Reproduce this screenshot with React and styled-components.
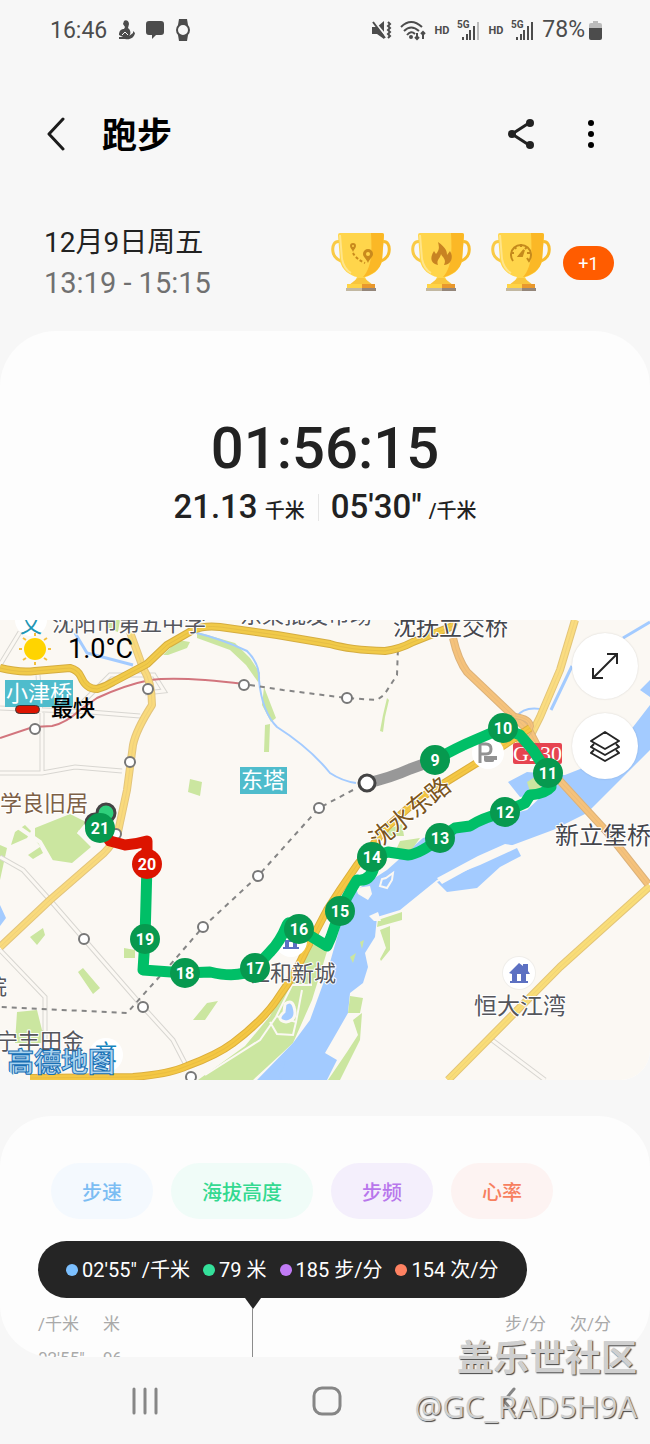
import styled, { createGlobalStyle } from "styled-components";

const GlobalStyle = createGlobalStyle`
	* {
		box-sizing: border-box;
	}
	body {
		margin: 0;
		background: #f7f7f7;
		color: #222;
		font-family: Roboto, "Noto Sans CJK SC", sans-serif;
	}
	button {
		border: 0;
		padding: 0;
		background: none;
		color: inherit;
		font: inherit;
		cursor: pointer;
	}
	svg {
		display: block;
	}
`;

const Page = styled.div`
	position: relative;
	display: flex;
	flex-direction: column;
`;

const StatusBar = styled.div`
	display: flex;
	align-items: center;
	justify-content: space-between;
	height: 60px;
	padding: 0 48px 0 50px;
	color: #4c4c4c;
	font-size: 23px;
`;

const StatusGroup = styled.div`
	display: flex;
	align-items: center;
	gap: ${(props) => props.$gap}px;
`;

const HdLabel = styled.span`
	font-size: 11px;
	font-weight: 700;
`;

const Percent = styled.span`
	display: flex;
	align-items: center;
	gap: 4px;
	line-height: 28px;
`;

const Header = styled.header`
	display: flex;
	align-items: center;
	height: 148px;
	padding: 0 45px 0 42px;
`;

const Title = styled.h1`
	flex: 1;
	margin: 0 0 0 32px;
	padding-top: 6px;
	color: #000;
	font-size: 35px;
	line-height: 44px;
	font-weight: 700;
`;

const IconButton = styled.button`
	display: flex;
	align-items: center;
	justify-content: center;
	width: 28px;
	height: 44px;
	margin-left: ${(props) => props.$space || 0}px;
`;

const Summary = styled.section`
	display: flex;
	align-items: center;
	justify-content: space-between;
	height: 110px;
	padding: 0 36px 0 44px;
`;

const DateText = styled.div`
	color: #222;
	font-size: 28px;
	line-height: 40px;
`;

const TimeRange = styled.div`
	color: #707070;
	font-size: 29px;
	line-height: 40px;
`;

const Awards = styled.div`
	display: flex;
	align-items: center;
	gap: 20px;
`;

const MoreAwards = styled.button`
	width: 51px;
	height: 34px;
	margin-left: -8px;
	border-radius: 17px;
	background: #ff5c00;
	color: #fff;
	font-size: 18px;
`;

const Card = styled.section`
	overflow: hidden;
	margin-top: ${(props) => props.$top}px;
	border-radius: ${(props) => props.$radius};
	background: #fdfdfd;
`;

const Totals = styled.div`
	display: flex;
	flex-direction: column;
	align-items: center;
	padding: 82px 0 87px;
`;

const Duration = styled.div`
	font-size: 58px;
	line-height: 70px;
	font-weight: 500;
`;

const Metrics = styled.div`
	display: flex;
	align-items: center;
	margin-top: 2px;
`;

const Metric = styled.div`
	padding: 0 13px;
	font-size: 33px;
	line-height: 44px;
	font-weight: 500;

	& + & {
		background: linear-gradient(#e6e6e6, #e6e6e6) 0 9px / 1px 27px no-repeat;
	}
`;

const Unit = styled.span`
	margin-left: 7px;
	font-size: 20px;
`;

const MapBox = styled.div`
	position: relative;

	> svg {
		width: 100%;
		height: auto;
	}
`;

const MapLegend = styled.div`
	position: absolute;
	top: 11px;
	left: 15px;
	color: #000;
`;

const Weather = styled.div`
	display: flex;
	align-items: center;
	gap: 13px;
	font-size: 27px;
	line-height: 36px;
`;

const Fastest = styled.div`
	display: flex;
	align-items: center;
	gap: 11px;
	margin-top: 26px;
	font-size: 22px;
	line-height: 32px;
	font-weight: 500;
`;

const FastestSwatch = styled.span`
	width: 25px;
	height: 9px;
	border: 1px solid #3a3a3a;
	border-radius: 5px;
	background: #dc1400;
`;

const MapControls = styled.div`
	position: absolute;
	top: 13px;
	right: 12px;
	display: flex;
	flex-direction: column;
	gap: 14px;
`;

const RoundButton = styled.button`
	display: flex;
	align-items: center;
	justify-content: center;
	width: 66px;
	height: 66px;
	border-radius: 50%;
	background: #fff;
	box-shadow: 0 0 2px rgba(0, 0, 0, 0.15);
`;

const Chips = styled.div`
	display: flex;
	gap: 18px;
	padding: 47px 51px 0;
`;

const Chip = styled.button`
	height: 56px;
	padding: 0 31px;
	border-radius: 28px;
	background: ${(props) => props.$tint};
	color: ${(props) => props.$color};
	font-size: 20px;
	font-weight: 500;
	white-space: nowrap;
`;

const Chart = styled.div`
	position: relative;
	height: 138px;
	overflow: hidden;
	padding: 22px 38px 0;
`;

const Cursor = styled.div`
	position: absolute;
	top: 79px;
	bottom: 0;
	left: 245px;
	width: 16px;

	&::before {
		content: "";
		position: absolute;
		top: 0;
		left: 0;
		border: 8px solid transparent;
		border-top: 11px solid #252525;
		border-bottom: 0;
	}

	&::after {
		content: "";
		position: absolute;
		top: 10px;
		bottom: 0;
		left: 7px;
		width: 1px;
		background: #8c8c8c;
	}
`;

const Readout = styled.div`
	display: inline-flex;
	align-items: center;
	gap: 13px;
	height: 57px;
	padding: 0 29px 0 28px;
	border-radius: 29px;
	background: #252525;
	color: #fff;
	font-size: 20px;
	line-height: 28px;
	white-space: nowrap;
`;

const ReadoutItem = styled.span`
	display: flex;
	align-items: center;
	gap: 4px;

	&::before {
		content: "";
		width: 12px;
		height: 12px;
		border-radius: 50%;
		background: ${(props) => props.$color};
	}
`;

const AxisRow = styled.div`
	display: flex;
	gap: 23px;
	height: 34px;
	padding-top: 10px;
	color: #a9a9a9;
	font-size: 17px;
	line-height: 32px;
`;

const AxisCell = styled.span`
	width: 42px;
	margin-left: ${(props) => (props.$end ? "auto" : "0")};
	white-space: nowrap;
`;

const NavBar = styled.nav`
	display: flex;
	align-items: center;
	justify-content: space-between;
	height: 87px;
	padding: 0 120px 0 124px;
`;

const NavButton = styled.button`
	display: flex;
	align-items: center;
	justify-content: center;
	width: 42px;
	height: 44px;
	color: #868686;
`;

const Watermark = styled.div`
	position: absolute;
	right: 13px;
	bottom: 14px;
	color: #cfcfcf;
	font-family: "Open Sans", "Noto Sans CJK SC", sans-serif;
	line-height: 48px;
	text-align: right;
	text-shadow: 1px 1px 1px #444;
	pointer-events: none;
`;

const Community = styled.div`
	font-size: 36px;
	font-weight: 700;
`;

const Member = styled.div`
	font-size: 31px;
`;

const trophies = ["route", "flame", "gauge"];

const chips = [
	{ label: "步速", color: "#7cbdf3", tint: "#f4f9fe" },
	{ label: "海拔高度", color: "#34d990", tint: "#f0fcf8" },
	{ label: "步频", color: "#b877ec", tint: "#f4effc" },
	{ label: "心率", color: "#f7805f", tint: "#fdf3f2" },
];

const readings = [
	{ text: "02'55\" /千米", color: "#7cc0ff" },
	{ text: "79 米", color: "#34e09a" },
	{ text: "185 步/分", color: "#c17bf5" },
	{ text: "154 次/分", color: "#ff8262" },
];

const pins = [
	[9, 435, 140],
	[10, 503, 108],
	[11, 548, 153],
	[12, 505, 192],
	[13, 440, 218],
	[14, 372, 237],
	[15, 340, 291],
	[16, 299, 309],
	[17, 255, 348],
	[18, 185, 353],
	[19, 145, 319],
	[20, 147, 244],
	[21, 100, 208],
];

const stations = [
	[148, 69],
	[130, 142],
	[244, 65],
	[35, 109],
	[347, 78],
	[319, 188],
	[258, 256],
	[203, 307],
	[84, 319],
	[143, 387],
	[191, 457],
	[116, 214],
];

const lanes =
	"M0 237L23 250L50 280L83 318L143 387L173 420L187 447M0 330L45 377V420M0 153H42L75 147L122 151M42 93V153M0 88L90 92L140 96M38 55L41 93M20 12L0 45M80 85L110 55L154 55L164 71L145 73M492 420L545 460";

const roads = [
	{ d: "M130 12L143 48Q152 62 152 85Q136 110 133 125L127 170L118 212Q113 224 104 233L50 280L0 327", width: 6, edge: "#e2c47c", fill: "#f9da7c" },
	{ d: "M575 0L560 50L540 97L527 123", width: 6, edge: "#e3c578", fill: "#fadc80" },
	{ d: "M650 266L560 347L448 460", width: 6, edge: "#e3c578", fill: "#f9dd78" },
	{ d: "M453 18Q458 40 467 52L507 90L530 112L550 150L607 212L648 264", width: 6, edge: "#dcb27a", fill: "#f5c27b" },
	{ d: "M515 96Q530 98 531 106Q528 118 516 121", width: 4, edge: "#dcb27a", fill: "#f5c27b" },
	{ d: "M0 48Q20 53 35 51L70 48Q78 50 81 57Q86 69 97 69Q105 67 113 62L147 44L167 25L193 10Q205 5 220 7L277 15L330 24Q350 30 385 31Q400 29 413 22L453 6L455 0", width: 6, edge: "#d5ad40", fill: "#f1ca49" },
	{ d: "M30 458L133 457Q170 454 187 446Q217 435 233 423Q265 399 280 375Q294 356 305 332L327 290L340 270L357 245L387 207L417 180L480 141L530 108", width: 6, edge: "#dbae3d", fill: "#f4c744" },
];

function Trophy({ kind }) {
	return (
		<svg width="60" height="60" viewBox="0 0 60 60" role="img" aria-label={kind}>
			<g fill="none" stroke="#f9ca45" strokeWidth="3">
				<path d="M10 9C3 7 1 13 2 19C3 25 8 28 14 29" />
				<path d="M50 9C57 7 59 13 58 19C57 25 52 28 46 29" stroke="#f8bd2d" />
			</g>
			<path d="M7 2Q7 0 9 0H51Q53 0 53 2L51 27C50 37 40 43 34 44L36 48H24L26 44C20 43 10 37 9 27Z" fill="#ffd54b" />
			<path d="M40 0H51Q53 0 53 2L51 27C50 37 39 43 32 44C41 34 41 19 40 0Z" fill="#fbb826" />
			<path d="M9 2L11 26Q13 36 20 40" fill="none" stroke="#ffe58a" strokeWidth="2" />
			<path d="M27 45H33L42 52H18Z" fill="#f8c53c" />
			<path d="M16 51H44V56H16Z" fill="#ffd447" />
			<path d="M31 51H44V56H31Z" fill="#e8982d" />
			<path d="M15 55H45V58H15Z" fill="#c2b8a2" />
			<path d="M31 55H45V58H31Z" fill="#94867a" />
			{kind === "route" && (
				<g fill="#c98a1d">
					<path fillRule="evenodd" d="M22 10a3 3 0 0 1 3 3c0 2-2 3-3 6c-1-3-3-4-3-6a3 3 0 0 1 3-3Zm0 2a1 1 0 1 0 0 2a1 1 0 0 0 0-2ZM37 16a5 5 0 0 1 5 5c0 3-3 4-5 9c-2-5-5-6-5-9a5 5 0 0 1 5-5Zm0 3a2 2 0 1 0 0 4a2 2 0 0 0 0-4Z" />
					<path d="M22 20Q25 26 34 30" fill="none" stroke="#c98a1d" strokeWidth="2" strokeDasharray="3 2" />
				</g>
			)}
			{kind === "flame" && (
				<path d="M27 9C35 15 36 18 36 22L39 18C43 24 40 32 33 32C36 26 31 24 30 21C29 26 25 27 27 32C19 30 19 24 23 18L25 21C29 17 28 13 27 9Z" fill="#c88322" />
			)}
			{kind === "gauge" && (
				<g fill="none" stroke="#c58a1c" strokeWidth="2">
					<path d="M22 28A10 10 0 1 1 38 28L36 25" />
					<path d="M30 11V14M20 20H23M40 20H36M24 14L25 16M36 14L34 16" />
					<path d="M28 23L33 17L31 23Z" fill="#c58a1c" />
				</g>
			)}
		</svg>
	);
}

function Signal({ weak }) {
	return (
		<svg width="23" height="22" viewBox="0 0 23 22" fill="#4c4c4c">
			<text x="0" y="9" fontSize="10" fontWeight="700">5G</text>
			<rect x="5" y="18" width="2" height="3" />
			<rect x="9" y="15" width="2" height="6" />
			<rect x="12" y="11" width="2" height="10" />
			<rect x="16" y="7" width="2" height="14" />
			<rect x="20" y="3" width="2" height="18" fill={weak ? "#bcbcbc" : "#4c4c4c"} />
		</svg>
	);
}

function Status() {
	return (
		<StatusBar>
			<StatusGroup $gap={11}>
				<span>16:46</span>
				<svg width="17" height="20" viewBox="0 0 17 20" fill="#4c4c4c">
					<path d="M6 1C8-1 11 1 11 4L10 8C13 10 13 14 11 16L15 13V11L17 13C16 18 12 20 7 19H1V17H5L1 15C1 11 3 9 6 9L7 7L5 4Z" />
					<path d="M4 15L7 12L10 15" fill="none" stroke="#f7f7f7" />
				</svg>
				<svg width="18" height="18" viewBox="0 0 18 18" fill="#4c4c4c">
					<path d="M3 0H15Q18 0 18 3V11Q18 14 15 14H10L6 18V14H3Q0 14 0 11V3Q0 0 3 0Z" />
				</svg>
				<svg width="16" height="22" viewBox="0 0 16 22" fill="#4c4c4c">
					<path d="M4 0H12L13 6H3ZM3 16H13L12 22H4Z" />
					<circle cx="8" cy="11" r="6" fill="#f7f7f7" stroke="#4c4c4c" strokeWidth="2" />
				</svg>
			</StatusGroup>
			<StatusGroup $gap={8}>
				<svg width="20" height="20" viewBox="0 0 20 20" fill="#4c4c4c">
					<path d="M0 7H5L12 1V19L5 14H0Z" />
					<path d="M1 0L14 16" stroke="#f7f7f7" strokeWidth="2" />
					<path d="M1 2L13 18M16 2L18 4L16 6L18 8L16 10L18 12L16 14L18 16L16 18" fill="none" stroke="#4c4c4c" strokeWidth="2" />
				</svg>
				<svg width="26" height="21" viewBox="0 0 26 21" fill="none" stroke="#4c4c4c" strokeWidth="2">
					<path d="M1 7Q11-3 22 7M4 11Q11 4 19 11M7 15Q11 10 15 14" />
					<circle cx="11" cy="17" r="1" />
					<path d="M17 13V19M15 17L17 19L19 17M23 19V12M21 14L23 12L25 14" />
				</svg>
				<HdLabel>HD</HdLabel>
				<Signal weak />
				<HdLabel>HD</HdLabel>
				<Signal />
				<Percent>
					78%
					<svg width="13" height="19" viewBox="0 0 13 19" fill="#4c4c4c">
						<path d="M4 0H9V2H11Q13 2 13 4V8H0V4Q0 2 2 2H4Z" fill="#bcbcbc" />
						<path d="M0 7H13V17Q13 19 11 19H2Q0 19 0 17Z" />
					</svg>
				</Percent>
			</StatusGroup>
		</StatusBar>
	);
}

function Terrain() {
	return (
		<>
			<rect width="650" height="460" fill="#fbf8f3" />
			<g fill="#cbe6a0">
				<path d="M35 208L70 194L86 202L77 213L91 227L72 243L52 240L35 220Z" />
				<path d="M11 225L15 212L25 205L31 211L27 218ZM28 235L40 227L43 233L33 239ZM0 225L7 228L0 260ZM30 317L43 308L45 315L37 325ZM78 352L83 348L100 368L93 374ZM124 328L135 330V338H124ZM193 400L207 383L218 381L205 400ZM17 392L37 390L42 410H47V423H15ZM190 159L202 162L200 176L188 172Z" />
				<path d="M197 12L235 23L250 38L260 53L258 62L246 45L230 30L197 18ZM163 35L178 20L190 22L187 28L168 35ZM105 0L120 0L118 12L106 8ZM264 67L276 98L271 102L262 85ZM265 105L270 104L269 132H264Z" />
				<path d="M198 460L245 426L270 396L293 350L308 325H329L312 380L293 423L253 460Z" />
				<path d="M387 78L383 95L380 111L383 112L385 97L389 80Z" />
			</g>
			<g fill="#a3cbff">
				<path d="M650 85L633 107L603 140L565 155L527 152L508 162L520 177L545 173L527 190L487 200L423 218L387 250L353 272L340 307L327 353L310 400L293 423L257 460H327L337 440L325 433L340 407L348 393L350 373L363 363L368 347L365 333L375 317L377 297L400 290L437 260L480 240L507 227L553 210L587 193L620 160L650 130Z" />
				<path d="M437 262L447 272L477 268L500 247L521 236L517 228L480 245ZM640 70L650 60V77Z" />
				<path d="M0 285L6 298L0 306ZM278 450L287 432L281 460Z" />
			</g>
			<g fill="#cbe6a0">
				<path d="M527 162L535 157L543 170L531 175ZM386 210L402 204L404 216H387ZM400 221L420 218L410 232H395Z" />
				<path d="M378 300L402 292V300L377 307ZM380 310L390 306V330L381 341L380 339L386 328ZM350 376L363 378L360 393H348ZM353 400L362 393L360 420L340 460H328L347 432L358 415Z" />
				<path d="M360 322L364 320L362 329ZM350 337L356 333L353 343Z" />
			</g>
			<path d="M356 268L370 266L372 274L368 280L358 274ZM369 296L378 292L381 301L374 301ZM437 258L442 264L480 243L507 229L517 226L505 224L478 236Z" fill="#fbf8f3" />
			<g fill="none" stroke="#fbf8f3" strokeWidth="2">
				<path d="M386 258L393 253L392 260L387 268L380 266L382 259Z" />
				<path d="M205 455L260 420L276 397L292 365L312 365M276 396L296 402L302 370M296 402L293 415L277 414L270 402" />
				<path d="M285 384Q292 379 294 387Q298 400 286 402Q275 400 284 392Z" fill="#a3cbff" strokeWidth="3" />
				<path d="M15 205L40 222L55 248M78 212L97 220" strokeWidth="4" />
			</g>
			<g fill="none" stroke="#a3cbff" strokeWidth="3">
				<path d="M193 12Q222 19 247 31Q260 44 259 60Q262 92 277 107Q310 128 330 153Q342 161 356 163" strokeWidth="2" />
				<path d="M75 13L87 33L133 45M650 2L623 18M572 46L562 67L551 90" />
				<path d="M545 90Q525 85 516 97" strokeWidth="2" />
			</g>
			<g fill="none">
				<path d={lanes} stroke="#d8d6d1" strokeWidth="5" />
				<path d={lanes} stroke="#fbf8f3" strokeWidth="3" />
			</g>
			<path d="M0 118L33 107L52 106Q66 103 80 90L97 78Q125 65 150 60Q180 56 244 64" fill="none" stroke="#d2757d" strokeWidth="2" />
			<g fill="none" stroke="#858585" strokeWidth="2" strokeDasharray="5 5">
				<path d="M250 65L283 70L347 78L377 80L384 75L397 55L398 27" />
				<path d="M353 170L319 188L258 256L203 307L170 345L143 375L127 393L0 387" />
			</g>
			{roads.map((road) => (
				<g key={road.d} fill="none" strokeLinejoin="round">
					<path d={road.d} stroke={road.edge} strokeWidth={road.width + 2} />
					<path d={road.d} stroke={road.fill} strokeWidth={road.width} />
					<path d={road.d} stroke={road.edge} strokeWidth="1" opacity="0.4" />
				</g>
			))}
			{stations.map(([x, y]) => (
				<circle key={`${x}-${y}`} cx={x} cy={y} r="5" fill="#fff" stroke="#777" strokeWidth="2" />
			))}
		</>
	);
}

function Places() {
	return (
		<g fontFamily="'Noto Sans CJK SC', sans-serif" fontSize="22" fill="#55565c">
			<circle cx="31" cy="0" r="16" fill="#fff" />
			<text x="20" y="12" fill="#2296b5">文</text>
			<circle cx="106" cy="435" r="17" fill="#fff" />
			<text x="95" y="440" fill="#1383be">文</text>
			<g stroke="#fff" strokeWidth="2" paintOrder="stroke" strokeLinejoin="round">
				<text x="52" y="11">沈阳市第五中学</text>
				<text x="240" y="3">东果批发市场</text>
				<text x="393" y="15" fontSize="23" fill="#45464c">沈抚立交桥</text>
				<text x="0" y="191" fill="#7d6046">学良旧居</text>
				<text x="555" y="224" fontSize="24" fill="#45464c">新立堡桥</text>
				<text x="248" y="361">仁和新城</text>
				<text x="474" y="394" fontSize="23">恒大江湾</text>
				<text x="-4" y="429">宁丰田金</text>
				<text x="-15" y="374">院</text>
				<text x="0" y="0" transform="translate(378 229) rotate(-39)" fill="#7b5520" fontSize="24">沈水东路</text>
			</g>
			<rect x="5" y="60" width="68" height="27" fill="#4fbccc" />
			<text x="6" y="81" fill="#fff">小津桥</text>
			<rect x="240" y="147" width="47" height="27" fill="#4fbccc" />
			<text x="241" y="168" fill="#fff">东塔</text>
			<rect x="513" y="123" width="49" height="21" rx="2" fill="#e64450" />
			<text x="513" y="141" fill="#fff" fontFamily="'Liberation Serif', serif">G230</text>
			<circle cx="488" cy="133" r="16" fill="#fff" />
			<path d="M480 143V124H486Q491 124 491 129Q491 134 486 134H480" fill="none" stroke="#929292" strokeWidth="3" />
			<path d="M484 136H494V141Q494 142 492 142H486Q484 142 484 140ZM494 136H497V140H494Z" fill="#929292" />
			<circle cx="519" cy="353" r="17" fill="#f0eeea" />
			<circle cx="519" cy="353" r="16" fill="#fff" />
			<path d="M509 353L519 343L523 346V344H528V351L530 354H526V361H528V363H510V361H512V354ZM517 354V361H521V354Z" fill="#5c70c2" fillRule="evenodd" />
			<circle cx="291" cy="321" r="16" fill="#fff" />
			<path d="M283 329V327H285V320H297V327H299V329ZM289 322V327H293V322Z" fill="#5c70c2" fillRule="evenodd" />
			<text x="7" y="452" fontSize="27" fontWeight="700" fill="#a9d4f0" stroke="#176fb5" strokeWidth="1">高德地图</text>
		</g>
	);
}

function Track() {
	return (
		<>
			<g fill="none" strokeWidth="11" strokeLinecap="round" strokeLinejoin="round">
				<path d="M367 163Q390 158 410 149L435 140" stroke="#989898" />
				<path d="M435 140Q458 127 475 120L503 108L520 115L533 130L548 153L551 167Q545 174 530 175L525 183L505 192Q482 198 470 206L455 208L440 218Q420 234 408 235L388 232L372 237L374 247Q370 262 357 260Q346 278 340 291L331 317L327 326L299 309Q290 299 287 305Q280 322 270 332L255 348Q240 359 210 352L185 353L143 350L145 319L147 244" stroke="#00bf67" />
				<path d="M147 244V221Q137 224 125 225L110 221L101 208" stroke="#dc1400" />
			</g>
			<circle cx="367" cy="163" r="8" fill="#fff" stroke="#444" strokeWidth="3" />
			<circle cx="95" cy="203" r="9" fill="#087c47" stroke="#444" strokeWidth="3" />
			<circle cx="106" cy="193" r="9" fill="#2ecf7b" stroke="#444" strokeWidth="3" />
			{pins.map(([km, x, y]) => (
				<g key={km}>
					<circle cx={x} cy={y} r="15" fill={km === 20 ? "#dc1400" : "#07994f"} />
					<text x={x} y={y + 6} fill="#fff" fontSize="16" fontWeight="700" textAnchor="middle">
						{km}
					</text>
				</g>
			))}
		</>
	);
}

function RouteMap() {
	return (
		<MapBox>
			<svg viewBox="0 0 650 460">
				<Terrain />
				<Places />
				<Track />
			</svg>
			<MapLegend>
				<Weather>
					<svg width="40" height="36" viewBox="0 0 40 36">
						<circle cx="20" cy="18" r="11" fill="#ffd400" />
						<path d="M20 2V5M20 31V34M4 18H7M33 18H36M8 7L11 9M32 7L29 9M8 29L11 27M32 29L29 27" stroke="#f4bf3b" strokeWidth="2" />
					</svg>
					1.0°C
				</Weather>
				<Fastest>
					<FastestSwatch />
					最快
				</Fastest>
			</MapLegend>
			<MapControls>
				<RoundButton aria-label="expand">
					<svg width="28" height="28" viewBox="0 0 28 28" fill="none" stroke="#252525" strokeWidth="2">
						<path d="M2 26L26 2M16 2H26V12M2 16V26H12" />
					</svg>
				</RoundButton>
				<RoundButton aria-label="layers">
					<svg width="32" height="32" viewBox="0 0 32 32" fill="none" stroke="#252525" strokeWidth="2" strokeLinejoin="round">
						<path d="M16 2L30 11L16 19L2 11ZM5 14L2 17L16 25L30 17L27 14M5 20L2 23L16 31L30 23L27 20" />
					</svg>
				</RoundButton>
			</MapControls>
		</MapBox>
	);
}

function App() {
	return (
		<Page>
			<GlobalStyle />
			<Status />
			<Header>
				<IconButton aria-label="back">
					<svg width="20" height="34" viewBox="0 0 20 34" fill="none" stroke="#1c1c1c" strokeWidth="3" strokeLinecap="round" strokeLinejoin="round">
						<path d="M17 2L3 17L17 32" />
					</svg>
				</IconButton>
				<Title>跑步</Title>
				<IconButton aria-label="share">
					<svg width="28" height="30" viewBox="0 0 28 30" fill="#222">
						<path d="M22 4L5 15L22 26" fill="none" stroke="#222" strokeWidth="3" />
						<circle cx="23" cy="4" r="4" />
						<circle cx="5" cy="15" r="4" />
						<circle cx="23" cy="26" r="4" />
					</svg>
				</IconButton>
				<IconButton $space={42} aria-label="more">
					<svg width="6" height="30" viewBox="0 0 6 30" fill="#000">
						<circle cx="3" cy="4" r="3" />
						<circle cx="3" cy="15" r="3" />
						<circle cx="3" cy="26" r="3" />
					</svg>
				</IconButton>
			</Header>
			<Summary>
				<div>
					<DateText>12月9日周五</DateText>
					<TimeRange>13:19 - 15:15</TimeRange>
				</div>
				<Awards>
					{trophies.map((kind) => (
						<Trophy key={kind} kind={kind} />
					))}
					<MoreAwards>+1</MoreAwards>
				</Awards>
			</Summary>
			<Card $top={13} $radius="56px 56px 30px 30px">
				<Totals>
					<Duration>01:56:15</Duration>
					<Metrics>
						<Metric>
							21.13<Unit>千米</Unit>
						</Metric>
						<Metric>
							05'30"<Unit>/千米</Unit>
						</Metric>
					</Metrics>
				</Totals>
				<RouteMap />
			</Card>
			<Card $top={36} $radius="52px">
				<Chips>
					{chips.map((chip) => (
						<Chip key={chip.label} $color={chip.color} $tint={chip.tint}>
							{chip.label}
						</Chip>
					))}
				</Chips>
				<Chart>
					<Readout>
						{readings.map((reading) => (
							<ReadoutItem key={reading.text} $color={reading.color}>
								{reading.text}
							</ReadoutItem>
						))}
					</Readout>
					<Cursor />
					<AxisRow>
						<AxisCell>/千米</AxisCell>
						<AxisCell>米</AxisCell>
						<AxisCell $end>步/分</AxisCell>
						<AxisCell>次/分</AxisCell>
					</AxisRow>
					<AxisRow>
						<AxisCell>02'55"</AxisCell>
						<AxisCell>96</AxisCell>
					</AxisRow>
				</Chart>
			</Card>
			<NavBar>
				<NavButton aria-label="recents">
					<svg width="26" height="28" viewBox="0 0 26 28" stroke="currentColor" strokeWidth="3" strokeLinecap="round">
						<path d="M2 2V26M13 2V26M24 2V26" />
					</svg>
				</NavButton>
				<NavButton aria-label="home">
					<svg width="30" height="30" viewBox="0 0 30 30" fill="none" stroke="currentColor" strokeWidth="3">
						<rect x="2" y="2" width="26" height="26" rx="8" />
					</svg>
				</NavButton>
				<NavButton aria-label="back">
					<svg width="16" height="28" viewBox="0 0 16 28" fill="none" stroke="currentColor" strokeWidth="3" strokeLinecap="round">
						<path d="M13 2L3 14L13 26" />
					</svg>
				</NavButton>
			</NavBar>
			<Watermark>
				<Community>盖乐世社区</Community>
				<Member>@GC_RAD5H9A</Member>
			</Watermark>
		</Page>
	);
}

export default App;
